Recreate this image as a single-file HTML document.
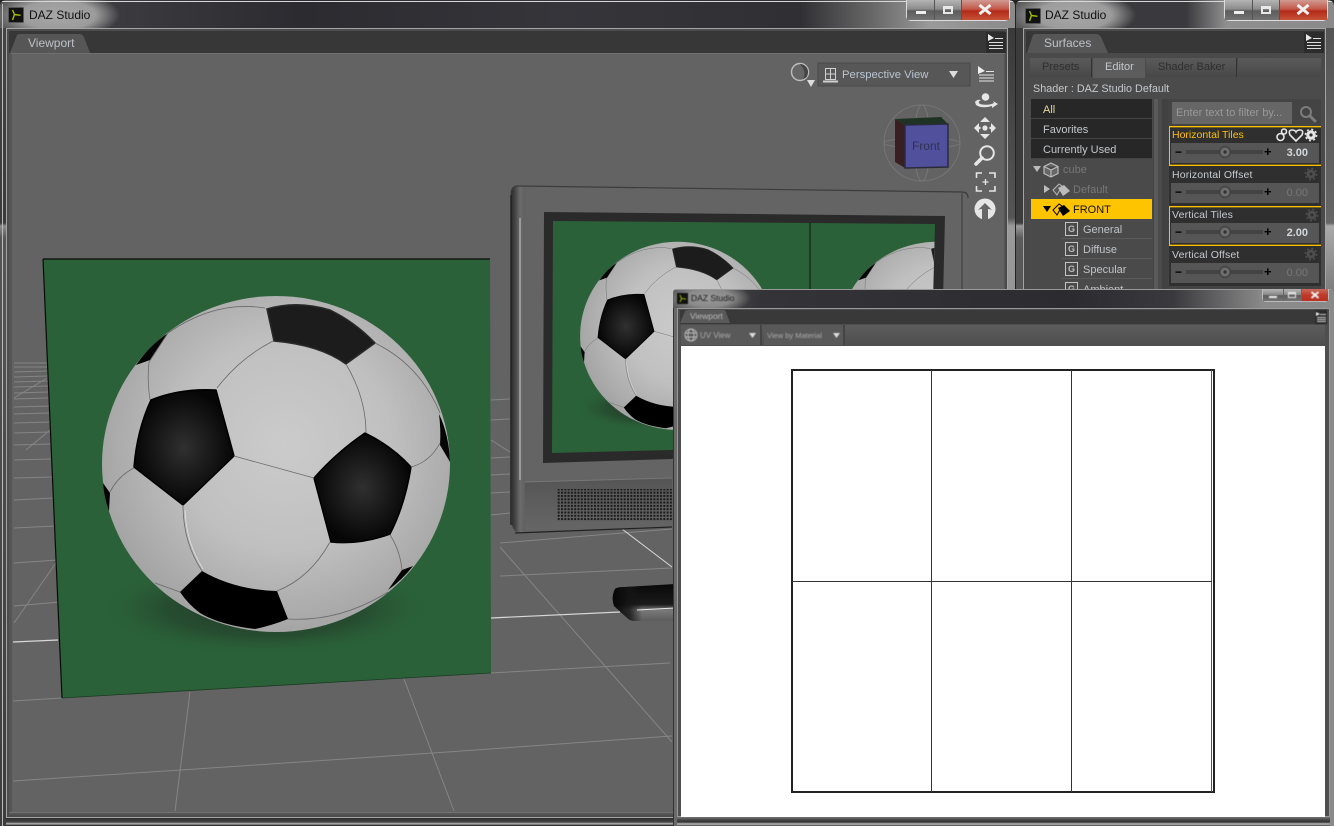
<!DOCTYPE html>
<html><head><meta charset="utf-8"><style>
html,body{margin:0;padding:0;background:#222;width:1334px;height:826px;overflow:hidden}
*{box-sizing:border-box}
body{font-family:"Liberation Sans",sans-serif;font-size:12px;position:relative}
.a,.a *{position:absolute}
.t{white-space:nowrap;line-height:14px}
.win{position:absolute;overflow:hidden;border-radius:6px 6px 0 0}
.row{left:0;width:121px;height:20px;border-bottom:1px solid #3a3a3a}
.row span{position:absolute;top:4px;white-space:nowrap;line-height:14px}
.dk{background:#272727;color:#c4c8cc;border-bottom:1px solid #444}
.sub{border-bottom:1px solid #5a5a5a;left:30px;width:91px;color:#c0c4c8}
.g{position:absolute;left:-1px;top:3px;width:13px;height:14px;border:1px solid #c4c4c4;color:#bbb;font-size:9px;line-height:12px;text-align:center;font-weight:bold}
.prop{left:1169px;width:152px;height:40px;background:#2f2f2f}
.prop.on{border:1px solid #ffc000;border-right:none;box-shadow:inset 0 1px 0 rgba(255,192,0,.35),inset 0 -1px 0 rgba(255,192,0,.35)}
.prop .lbl{left:3px;top:2px;color:#c6cbd0;letter-spacing:.15px}
.prop .sl{left:2px;top:17px;width:148px;height:20px;background:#565656}
.prop.on .lbl{top:1px}
.prop.on .sl{top:16px}
.trk{left:15px;top:7px;width:77px;height:4px;background:#444}
.knob{left:48px;top:3px;width:12px;height:12px;border-radius:50%;background:radial-gradient(circle,#333 0 1.5px,#777 2px,#666 4px,#333 6px)}
.mn{left:4px;top:3px;color:#000;font-weight:bold;line-height:12px;font-size:12px}
.pl{left:93px;top:3px;color:#000;font-weight:bold;line-height:12px;font-size:13px}
.val{right:11px;top:3px;font-weight:bold;color:#d4d8dc;font-size:11px;line-height:14px}
.val.off{color:#777;font-weight:normal}
.btn{top:0;height:20px}
.gb{background:linear-gradient(180deg,#b4b4b4,#8c8c8c 45%,#5c5c5c 55%,#747474)}
.rb{background:linear-gradient(180deg,#d09a92,#c4584a 45%,#b32a18 55%,#c65238)}
.bl{filter:blur(.45px)}
.tab{top:58px;height:19px;background:linear-gradient(#5a5a5a,#484848);border-right:1px solid #333;color:#2f2f2f;padding:2px 0 0 12px;font-size:11px;line-height:15px}
</style></head><body>

<!-- MAIN WINDOW -->
<div class="win a" style="left:0;top:0;width:1015px;height:826px;background:linear-gradient(90deg,#2c2c2c 0,#3a3a3a 1014px)">
 <div style="left:0;top:0;width:1015px;height:29px;background:radial-gradient(ellipse 62px 24px at 58px 15px,#a6a6a6 0,#9c9c9c 60%,rgba(120,120,120,0) 100%),linear-gradient(90deg,#5c5c5c 0,#3c3c40 110px,#2b2b30 300px,#35353a 560px,#303034 800px,#6e6e6e 880px,#9a9a9a 930px,#8a8a8a 1015px)"></div>
 <div style="left:1px;top:1px;width:1013px;height:1px;background:#d8d8d8"></div>
 <div style="left:0;top:28px;width:7px;height:798px;background:linear-gradient(180deg,#444 0,#3a3a3a 195px,#8d8d8d 198px,#555 210px,#3c3c3c 798px)"></div>
 <div style="left:2px;top:4px;width:1px;height:822px;background:#bbb"></div>
 <div style="left:1007px;top:28px;width:8px;height:798px;background:linear-gradient(180deg,#3a3a3a 0,#555 190px,#9a9a9a 198px,#707070 798px)"></div>
 <div style="left:6px;top:28px;width:1002px;height:790px;border:1px solid #a4a4a4;background:#585858"></div>
 <div style="left:7px;top:29px;width:1000px;height:788px;background:#555;border:2px solid #4c4c4c"></div>
 <div style="left:9px;top:31px;width:996px;height:22px;background:#373737"></div>
 <svg style="left:0;top:0" width="100" height="56"><path d="M10 53 L17 35 Q18 34 20 34 L80 34 Q82 34 84 37 L90 53Z" fill="#565656"/></svg>
 <svg style="left:8px;top:7px" width="16" height="16"><rect x=".5" y=".5" width="15" height="15" rx="1" fill="#111" stroke="#555"/><path d="M4.500 3 L6.500 7.500 L4.500 13 M6.500 7.500 L12.500 8.300" stroke="#a0c000" stroke-width="1.4" fill="none"/></svg>
 <div class="t" style="left:29px;top:8px;color:#111">DAZ Studio</div>
 <div class="t" style="left:28px;top:36px;color:#bcc2c8">Viewport</div>
 <svg style="left:986px;top:32px" width="20" height="21"><rect width="20" height="21" fill="#2c2c2c"/><path d="M2 2 L8 6 L2 9Z" fill="#e8e8e8"/><path d="M9 6.500H17M3 10.500H17M3 13.500H17M3 16.500H17" stroke="#ddd"/></svg>
 <div style="left:11px;top:53px;width:994px;height:1px;background:#707070"></div>

 <svg style="left:12px;top:54px" width="992" height="758" viewBox="12 54 992 758">
  <defs>
   <radialGradient id="bg" gradientUnits="userSpaceOnUse" cx="285" cy="445" r="190"><stop offset="0" stop-color="#cbcbcb"/><stop offset=".55" stop-color="#c0c0c0"/><stop offset="1" stop-color="#a4a4a4"/></radialGradient>
   <radialGradient id="pb"><stop offset="0" stop-color="#303030"/><stop offset="1" stop-color="#060606"/></radialGradient>
   <radialGradient id="sh"><stop offset="0" stop-color="#1f2c22" stop-opacity=".9"/><stop offset=".6" stop-color="#24402b" stop-opacity=".6"/><stop offset="1" stop-color="#2a6138" stop-opacity="0"/></radialGradient>
   <linearGradient id="botg" x1="0" y1="0" x2="0" y2="1"><stop offset="0" stop-color="#555"/><stop offset="1" stop-color="#666"/></linearGradient>
   <linearGradient id="bl" x1="0" y1="0" x2="1" y2="0"><stop offset="0" stop-color="#2a2a2a"/><stop offset=".35" stop-color="#4a4a4a"/><stop offset=".65" stop-color="#6c6c6c"/><stop offset="1" stop-color="#606060"/></linearGradient>
   <linearGradient id="st" x1="0" y1="0" x2="0" y2="1"><stop offset="0" stop-color="#090909"/><stop offset=".55" stop-color="#1a1a1a"/><stop offset=".7" stop-color="#7a7a7a"/><stop offset="1" stop-color="#5c5c5c"/></linearGradient>
   <linearGradient id="stl" gradientUnits="userSpaceOnUse" x1="612" y1="0" x2="642" y2="0"><stop offset="0" stop-color="#050505"/><stop offset=".6" stop-color="#151515" stop-opacity=".8"/><stop offset="1" stop-color="#151515" stop-opacity="0"/></linearGradient>
   <pattern id="sp" width="3.3" height="3.3" patternUnits="userSpaceOnUse"><rect width="2" height="2" fill="#1a1a1a"/></pattern>
   <clipPath id="scr"><polygon points="553,221 935,224 933,300 672,450 552,453"/></clipPath>
   <g id="ball">
    <ellipse cx="276" cy="464" rx="174" ry="168" fill="url(#bg)"/>
    <path d="M267 309Q297 300 330 310Q355 322 375 343L346 364Q320 345 274 341Z" fill="#1c1c1c" stroke="#2a2a2a" stroke-width="1.5"/>
    <path d="M151 400Q180 388 216 390L234 456L183 505L134 467Q137 430 151 400Z" fill="url(#pb)" stroke="#000" stroke-width="1.5" stroke-linejoin="round"/>
    <path d="M365 433Q392 446 411 467Q405 505 390 534Q360 545 331 542L314 478Q337 452 365 433Z" fill="url(#pb)" stroke="#000" stroke-width="1.5" stroke-linejoin="round"/>
    <path d="M202 571Q235 590 277 591L288 619Q270 626 255 629Q220 625 200 613Q188 604 180 592Z" fill="#000"/>
    <path d="M136 365L150 360L168 333Q150 345 136 365Z" fill="#050505"/>
    <path d="M439 414Q441 430 440 445L450 462Q449 435 439 414Z" fill="#050505"/>
    <path d="M103 483L110 493L109 511Q104 497 103 483Z" fill="#050505"/>
    <path d="M388 590L402 570L413 566Q402 580 388 590Z" fill="#050505"/>
    <g fill="none" stroke="#6a6a6a" stroke-width=".8">
     <path d="M217 388Q240 358 273 341"/><path d="M150 400Q147 380 149 362L168 333"/>
     <path d="M168 333Q215 300 265 308"/><path d="M346 364Q366 398 366 433"/>
     <path d="M375 343Q420 365 440 413"/><path d="M411 467Q430 462 440 443"/>
     <path d="M234 456L314 478"/><path d="M183 505Q183 542 202 571"/>
     <path d="M134 468Q118 476 110 492"/><path d="M330 542Q310 578 277 591"/>
     <path d="M390 535Q400 550 402 570"/><path d="M288 619Q340 622 388 592"/>
     <path d="M155 583L180 592"/>
    </g>
    <path d="M185 510Q186 542 203 569" fill="none" stroke="#e6e6e6" stroke-width=".7"/>
   </g>
  </defs>
  <rect x="12" y="54" width="992" height="758" fill="#636363"/>
  <!-- grid -->
  <g stroke="#858585" stroke-width="1" fill="none">
   <path d="M14 363H48M14 367H48M14 372L48 371M14 377L48 376M14 382L48 381M14 387L49 386M14 393L49 392M14 399L49 398M14 407L50 406M14 414L50 413M14 423L50 422M14 433L50 432M14 445L51 444M14 460L52 459M14 478L53 477M14 500L54 498M14 528L56 526M14 563L58 560M14 606L60 602"/>
   <path d="M14 398L47 378M26 450L50 430M14 623L58 560"/>
   <path d="M13 701L62 698M491 673L670 663"/>
   <path d="M13 781L181 770L433 753L672 736"/>
   <path d="M190 692L175 811M404 679L454 811M500 547L672 742"/>
   <path d="M500 543L672 529M500 576L672 568"/>
   <path d="M491 440L510 452M491 458L510 457M491 475L510 474M491 493L510 492M491 515L510 513M491 420L510 419M491 400L510 399"/>
  </g>
  <path d="M13 642L58 640M491 618L620 612" stroke="#d8d8d8" stroke-width="1.2" fill="none"/>
  <path d="M622 529L672 567" stroke="#d8d8d8" stroke-width="1" fill="none"/>
  <!-- monitor -->
  <path d="M511 194Q511 186 518 186L962 192Q968 192 968 198L968 420L672 528L522 533Q513 533 512 524Z" fill="#646464"/>
  <path d="M511 194Q511 186 518 186L525 187L525 533L522 533Q513 533 512 524Z" fill="url(#bl)"/>
  <path d="M511 194Q511 186 518 186L962 192Q968 192 968 198" fill="none" stroke="#3c3c3c" stroke-width="1.2"/>
  <path d="M520 218V480" stroke="#ccc" stroke-width="1"/><path d="M511 195V525" stroke="#222" stroke-width="1.500"/>
  <path d="M962 193V300" stroke="#4a4a4a" stroke-width="1.500"/>
  <polygon points="525,482 672,478 672,526 525,530" fill="url(#botg)"/>
  <path d="M525 482L672 478" stroke="#777"/><path d="M515 533L672 527" stroke="#222" stroke-width="1.2"/>
  <rect x="557" y="489" width="118" height="32" fill="url(#sp)"/>
  <polygon points="544,212 945,216 943,300 672,459 543,463" fill="#2a2a2a"/>
  <polygon points="553,221 935,224 933,300 672,450 552,453" fill="#2a6138"/>
  <g clip-path="url(#scr)">
   <ellipse cx="650" cy="408" rx="75" ry="22" fill="url(#sh)"/>
   <use href="#ball" transform="translate(523 76) scale(.56)"/>
   <use href="#ball" transform="translate(782 76) scale(.56)"/>
   <path d="M810 222V460" stroke="#111" stroke-width="1"/>
  </g>
  <path d="M615 589Q617 587 625 587L675 584V621H634Q630 621 626 617L614 606Q611 597 615 589Z" fill="url(#st)"/>
  <path d="M615 589Q617 587 625 587L675 584V621H634Q630 621 626 617L614 606Q611 597 615 589Z" fill="url(#stl)"/>
  <path d="M637 610L675 608" stroke="#e8e8e8" stroke-width="1"/>
  <!-- plane -->
  <polygon points="43,259 490,259 491,673 62,698" fill="#2a6138"/>
  <path d="M43 259H490M43 259L62 698" stroke="#0a0a0a" stroke-width="1.2" fill="none"/>
  <path d="M62 698L491 673" stroke="#1a3a22" stroke-width=".8"/>
  <ellipse cx="265" cy="608" rx="168" ry="48" fill="url(#sh)"/>
  <use href="#ball"/>
  <!-- viewcube -->
  <g fill="none" stroke="#8a8a8a" stroke-width="1" opacity=".5">
   <circle cx="922" cy="143" r="38"/><ellipse cx="922" cy="143" rx="38" ry="5"/><ellipse cx="922" cy="143" rx="8" ry="38"/>
  </g>
  <polygon points="895,119 941,117 948,124 905,125" fill="#1f3325"/>
  <polygon points="895,119 905,125 905,168 895,162" fill="#3a1f22"/>
  <polygon points="905,125 948,124 948,167 905,168" fill="#50509c" stroke="#2b2b3c" stroke-width="1.500"/>
  <text x="926" y="150" font-family="Liberation Sans" font-size="12" fill="#2c2c44" text-anchor="middle" opacity=".85">Front</text>
  <!-- toolbar -->
  <circle cx="800" cy="72" r="8.500" fill="#666" stroke="#bdbdbd" stroke-width="1.400"/><path d="M800 64A8 8 0 0 1 808 72Q808 78 803 79Q807 72 800 64Z" fill="#444"/>
  <path d="M807 80H815L811 87Z" fill="#ddd"/>
  <rect x="818" y="63" width="152" height="23" fill="#575757" stroke="#4a4a4a"/>
  <g fill="none" stroke="#d0d0d0"><rect x="825.500" y="68.500" width="10" height="11"/><path d="M830.500 68V80M825 74H836"/><path d="M823 81.500H838" stroke-width="2"/></g>
  <text x="842" y="78" font-family="Liberation Sans" font-size="11.300" fill="#b8c4d0">Perspective View</text>
  <path d="M949 71H958L953.500 78Z" fill="#ddd"/>
  <path d="M978 66L985 71L978 74Z" fill="#eee"/><path d="M986 71.500H994M979 75H994M979 78H994M979 81H994" stroke="#e4e4e4"/>
  <!-- right tools -->
  <circle cx="985.500" cy="97" r="3.800" fill="#e6e6e6"/>
  <path d="M975 102Q977 99 981 100Q977 102 980 104Q988 106 994 103L993 101L998 104L992 108L992 106Q982 109 976 105Z" fill="#e6e6e6"/>
  <g fill="#e6e6e6"><path d="M985 117L990 122H980ZM985 139L990 134H980ZM974 128L979 123V133ZM996 128L991 123V133Z"/><circle cx="985" cy="128" r="2.600"/><circle cx="979.500" cy="128" r="1.200"/><circle cx="990.500" cy="128" r="1.200"/></g>
  <circle cx="987" cy="153" r="6.800" fill="none" stroke="#e6e6e6" stroke-width="2"/><path d="M982 158L976 164" stroke="#e6e6e6" stroke-width="3.600" stroke-linecap="round"/>
  <path d="M976.500 178V173H982M989 173H995V178M995 186V191H989M982 191H976.500V186" fill="none" stroke="#e6e6e6" stroke-width="1.600"/>
  <path d="M985.500 179V185M982.500 182H988.500" stroke="#e6e6e6" stroke-width="1.300"/>
  <circle cx="985" cy="209" r="10.500" fill="#e6e6e6"/><path d="M985 203L992 210Q990 209 988 209V220H982V209Q980 209 978 210Z" fill="#666"/>
 </svg>
 <div style="left:9px;top:812px;width:996px;height:3px;background:#555;border-top:1px solid #727272"></div>
 <div style="left:6px;top:818px;width:1002px;height:8px;background:linear-gradient(180deg,#2c2c2c,#444 4px,#c0c0c0 6px,#333 7px)"></div>
 <!-- buttons -->
 <div class="btn" style="left:906px;width:104px;height:21px;border:1px solid #ddd;border-top:none;border-radius:0 0 5px 5px;background:#555"></div>
 <div class="btn gb" style="left:907px;width:27px"></div>
 <div class="btn gb" style="left:935px;width:26px"></div>
 <div class="btn rb" style="left:962px;width:47px"></div>
 <div style="left:916px;top:11px;width:10px;height:3px;background:#eee"></div>
 <div style="left:943px;top:6px;width:10px;height:8px;border:2px solid #e8e8e8;border-top-width:3px"></div>
 <svg style="left:977px;top:4px" width="16" height="11"><path d="M2.500 1L13.500 10M13.500 1L2.500 10" stroke="#f0f0f0" stroke-width="3"/></svg>
</div>

<!-- SURFACES WINDOW -->
<div class="win a" style="left:1016px;top:0;width:318px;height:300px;background:#3a3a3a">
 <div style="left:0;top:0;width:318px;height:29px;background:radial-gradient(ellipse 62px 24px at 58px 15px,#a6a6a6 0,#9c9c9c 60%,rgba(120,120,120,0) 100%),linear-gradient(90deg,#5c5c5c,#3a3a3e 110px,#3a3a3e 170px,#8f8f8f 210px,#8a8a8a)"></div>
 <div style="left:1px;top:1px;width:316px;height:1px;background:#d8d8d8"></div>
 <div style="left:0;top:28px;width:7px;height:272px;background:linear-gradient(180deg,#3c3c3c 0,#3c3c3c 195px,#9a9a9a 198px,#5a5a5a 210px,#555)"></div>
 <div style="left:309px;top:28px;width:9px;height:272px;background:linear-gradient(180deg,#555 0,#666 195px,#aaa 198px,#777 272px)"></div>
 <div style="left:7px;top:28px;width:303px;height:272px;border:1px solid #a4a4a4;background:#4a4a4a"></div>
 <div style="left:10px;top:31px;width:298px;height:22px;background:#373737"></div>
 <svg style="left:0;top:0" width="100" height="56"><path d="M11 53 L17 35 Q18 34 20 34 L80 34 Q83 34 85 37 L92 53Z" fill="#565656"/></svg>
 <svg style="left:9px;top:8px" width="16" height="16"><rect x=".5" y=".5" width="15" height="15" rx="1" fill="#111" stroke="#555"/><path d="M4.500 3 L6.500 7.500 L4.500 13 M6.500 7.500 L12.500 8.300" stroke="#a0c000" stroke-width="1.400" fill="none"/></svg>
 <div class="t" style="left:29px;top:8px;color:#111">DAZ Studio</div>
 <div class="t" style="left:28px;top:36px;color:#bcc2c8">Surfaces</div>
 <svg style="left:272px;top:32px" width="36" height="21"><rect x="16" width="20" height="21" fill="#2c2c2c"/><path d="M18 2 L24 6 L18 9Z" fill="#e8e8e8"/><path d="M25 6.500H33M19 10.500H33M19 13.500H33M19 16.500H33" stroke="#ddd"/></svg>
 <div style="left:13px;top:58px;width:292px;height:242px;background:#4b4b4b"></div>
 <div class="t tab" style="left:14px;width:62px">Presets</div>
 <div class="t" style="left:77px;top:58px;width:52px;height:20px;background:#5c5c5c;color:#c4c8cc;padding:2px 0 0 12px;font-size:11px;line-height:15px">Editor</div>
 <div class="t tab" style="left:130px;width:91px">Shader Baker</div>
 <div class="t tab" style="left:222px;width:83px;border:none"></div>
 <div class="t" style="left:17px;top:82px;color:#c4c8cc;font-size:10.8px">Shader : DAZ Studio Default</div>
</div>

<!-- surfaces content (page coords) -->
<div class="a" style="left:0;top:0;width:1334px;height:300px;overflow:hidden;pointer-events:none">
 <div class="a" style="left:1031px;top:99px;width:121px;height:190px;background:#4a4a4a">
  <div class="row dk" style="top:0"><span style="left:12px;color:#e4d89a;font-size:11px">All</span></div>
  <div class="row dk" style="top:20px"><span style="left:12px;font-size:11px">Favorites</span></div>
  <div class="row dk" style="top:40px"><span style="left:12px;font-size:11px">Currently Used</span></div>
  <div class="row" style="top:60px;border:none"><span style="left:32px;color:#777;font-size:11px">cube</span>
   <svg style="left:2px;top:3px" width="30" height="16"><path d="M0 4H8L4 10Z" fill="#bbb"/><path d="M18 1L25 4.500V11.500L18 15L11 11.500V4.500ZM11 4.500L18 8L25 4.500M18 8V15" fill="#666" stroke="#bbb" stroke-width="1.200"/></svg></div>
  <div class="row" style="top:80px;border:none"><span style="left:42px;color:#777;font-size:11px">Default</span>
   <svg style="left:12px;top:3px" width="30" height="16"><path d="M1 3L7 7L1 11Z" fill="#bbb"/><path d="M10 8L16 2L19 4L14 13Z" fill="#555" stroke="#bbb"/><path d="M15 6L21 3L27 9L20 14Z" fill="#bbb"/></svg></div>
  <div class="row" style="top:100px;height:20px;border:none;background:#ffc400"><span style="left:42px;color:#111;font-size:11px">FRONT</span>
   <svg style="left:12px;top:3px" width="30" height="16"><path d="M0 4H8L4 10Z" fill="#000"/><path d="M10 8L16 2L19 4L14 13Z" fill="#ffc400" stroke="#000"/><path d="M15 6L21 3L27 9L20 14Z" fill="#000"/></svg></div>
  <div class="row sub" style="top:120px;height:20px;border-bottom:1px solid #5a5a5a"><span style="left:22px;font-size:11px">General</span><i class="g" style="font-style:normal;left:4px">G</i></div>
  <div class="row sub" style="top:140px"><span style="left:22px;font-size:11px">Diffuse</span><i class="g" style="font-style:normal;left:4px">G</i></div>
  <div class="row sub" style="top:160px"><span style="left:22px;font-size:11px">Specular</span><i class="g" style="font-style:normal;left:4px">G</i></div>
  <div class="row sub" style="top:180px;border:none"><span style="left:22px;font-size:11px">Ambient</span><i class="g" style="font-style:normal;left:4px">G</i></div>
 </div>
 <div style="left:1153px;top:99px;width:5px;height:190px;background:#5a5a5a;border-left:1px solid #444"></div>
 <div style="left:1162px;top:99px;width:6px;height:190px;background:#424242"></div>
 <div style="left:1168px;top:99px;width:153px;height:190px;background:#444"></div>
 <div class="t" style="left:1172px;top:102px;width:120px;height:22px;background:#666;color:#999;font-size:11px;padding:4px 0 0 4px">Enter text to filter by...</div>
 <svg style="left:1298px;top:104px" width="20" height="20"><circle cx="8" cy="8" r="5" fill="none" stroke="#7c7c7c" stroke-width="2"/><path d="M12 12L17 17" stroke="#7c7c7c" stroke-width="3" stroke-linecap="round"/></svg>

 <div class="prop on" style="top:126px"><div class="t lbl" style="color:#ffc000;font-size:10.5px;left:2px;letter-spacing:0">Horizontal Tiles</div><div class="sl" style="left:1px"><div class="trk"></div><div class="knob"></div><div class="mn">−</div><div class="pl">+</div><div class="val">3.00</div></div>
  <svg style="left:105px;top:0" width="46" height="16" fill="none" stroke="#e6e6e6" stroke-width="1.600"><circle cx="5.500" cy="10" r="3.500"/><circle cx="9" cy="4.500" r="2.500"/><path d="M21 14L15 8Q13 3 17 3Q20 3 21 5Q22 3 25 3Q29 3 27 8Z"/><circle cx="36" cy="8" r="3.200" stroke-width="3.200"/><circle cx="36" cy="8" r="5.600" stroke-width="1.600" stroke-dasharray="2 2.400"/></svg></div>
 <div class="prop" style="top:166px"><div class="t lbl" style="font-size:10.5px">Horizontal Offset</div><div class="sl"><div class="trk"></div><div class="knob"></div><div class="mn">−</div><div class="pl">+</div><div class="val off">0.00</div></div>
  <svg style="left:135px;top:1px" width="15" height="15" fill="none" stroke="#4e4e4e"><circle cx="7" cy="7" r="3" stroke-width="3"/><circle cx="7" cy="7" r="5.600" stroke-width="1.600" stroke-dasharray="2 2.400"/></svg></div>
 <div class="prop on" style="top:206px"><div class="t lbl" style="font-size:10.5px;left:2px">Vertical Tiles</div><div class="sl" style="left:1px"><div class="trk"></div><div class="knob"></div><div class="mn">−</div><div class="pl">+</div><div class="val">2.00</div></div>
  <svg style="left:135px;top:1px" width="15" height="15" fill="none" stroke="#4e4e4e"><circle cx="7" cy="7" r="3" stroke-width="3"/><circle cx="7" cy="7" r="5.600" stroke-width="1.600" stroke-dasharray="2 2.400"/></svg></div>
 <div class="prop" style="top:246px"><div class="t lbl" style="font-size:10.5px">Vertical Offset</div><div class="sl"><div class="trk"></div><div class="knob"></div><div class="mn">−</div><div class="pl">+</div><div class="val off">0.00</div></div>
  <svg style="left:135px;top:1px" width="15" height="15" fill="none" stroke="#4e4e4e"><circle cx="7" cy="7" r="3" stroke-width="3"/><circle cx="7" cy="7" r="5.600" stroke-width="1.600" stroke-dasharray="2 2.400"/></svg></div>

 <!-- surfaces buttons -->
 <div class="btn" style="left:1224px;width:104px;height:21px;border:1px solid #ddd;border-top:none;border-radius:0 0 5px 5px;background:#555"></div>
 <div class="btn gb" style="left:1225px;width:27px"></div>
 <div class="btn gb" style="left:1253px;width:26px"></div>
 <div class="btn rb" style="left:1280px;width:47px"></div>
 <div style="left:1234px;top:11px;width:10px;height:3px;background:#eee"></div>
 <div style="left:1261px;top:6px;width:10px;height:8px;border:2px solid #e8e8e8;border-top-width:3px"></div>
 <svg style="left:1295px;top:4px" width="16" height="11"><path d="M2.500 1L13.500 10M13.500 1L2.500 10" stroke="#f0f0f0" stroke-width="3"/></svg>
</div>

<!-- UV WINDOW -->
<div class="win a" style="left:673px;top:289px;width:661px;height:537px;background:#4a4a4a;border-radius:4px 4px 0 0">
 <div style="left:0;top:0;width:661px;height:19px;background:radial-gradient(ellipse 42px 16px at 36px 9px,#999 0,#8a8a8a 55%,rgba(120,120,120,0) 100%),linear-gradient(90deg,#5a5a5a,#343438 90px,#2c2c30 400px,#3a3a3e 500px,#8a8a8a 590px,#8a8a8a)"></div>
 <div style="left:0;top:0;width:661px;height:1px;background:#999"></div>
 <div style="left:0;top:19px;width:6px;height:518px;background:#6a6a6a;border-left:1px solid #333"></div>
 <div style="left:655px;top:19px;width:6px;height:518px;background:#8a8a8a"></div>
 <div style="left:4px;top:19px;width:653px;height:509px;border:1px solid #999;background:#4e4e4e"></div>
 <div style="left:7px;top:21px;width:647px;height:14px;background:#393939"></div>
 <svg style="left:0;top:19px" width="70" height="18"><path d="M7 15L12 3Q13 2 15 2H50Q52 2 53 4L57 15Z" fill="#595959"/></svg>
 <svg class="bl" style="left:4px;top:4px" width="11" height="11"><rect width="11" height="11" fill="#111"/><path d="M3 2L4.500 5.500L3 9M4.500 5.500L9 6" stroke="#9ab000" fill="none"/></svg>
 <div class="t bl" style="left:18px;top:2px;color:#1c1c1c;font-size:8.5px">DAZ Studio</div>
 <div class="t bl" style="left:17px;top:20px;color:#bbb;font-size:8.5px">Viewport</div>
 <svg class="bl" style="left:642px;top:21px" width="12" height="14"><rect width="12" height="14" fill="#2c2c2c"/><path d="M1 2L5 4L1 6Z" fill="#eee"/><path d="M5 4.500H11M2 7.500H11M2 9.500H11M2 11.500H11" stroke="#ccc"/></svg>
 <div style="left:8px;top:36px;width:644px;height:21px;background:linear-gradient(#5c5c5c,#4e4e4e)"></div>
 <div style="left:8px;top:36px;width:81px;height:20px;background:#595959;border-right:2px solid #444"></div>
 <div style="left:91px;top:36px;width:81px;height:20px;background:#595959;border-right:2px solid #444"></div>
 <svg class="bl" style="left:11px;top:39px" width="15" height="15" fill="none" stroke="#bbb"><circle cx="7" cy="7" r="6"/><ellipse cx="7" cy="7" rx="3" ry="6"/><path d="M1 5H13M1 9H13"/></svg>
 <div class="t bl" style="left:27px;top:40px;color:#aaa;font-size:8px">UV View</div>
 <div class="t bl" style="left:94px;top:40px;color:#aaa;font-size:7.5px">View by Material</div>
 <svg class="bl" style="left:0;top:36px" width="180" height="20" fill="#ddd"><path d="M76 8H83L79.500 13ZM160 8H167L163.500 13Z"/></svg>
 <div style="left:8px;top:57px;width:644px;height:471px;background:#fff"></div>
 <div style="left:118px;top:80px;width:424px;height:424px;border:2px solid #222"></div>
 <div style="left:258px;top:81px;width:1px;height:422px;background:#333"></div>
 <div style="left:398px;top:81px;width:1px;height:422px;background:#333"></div>
 <div style="left:538px;top:81px;width:1px;height:422px;background:#555"></div>
 <div style="left:119px;top:292px;width:420px;height:1px;background:#333"></div>
 <div style="left:4px;top:528px;width:653px;height:9px;background:linear-gradient(180deg,#777,#444 3px,#333 5px,#bbb 7px,#444)"></div>
 <!-- buttons -->
 <div style="left:589px;top:0;width:67px;height:13px;border:1px solid #bbb;border-top:none;border-radius:0 0 4px 4px;background:#666"></div>
 <div class="gb" style="left:590px;top:0;width:20px;height:12px"></div>
 <div class="gb" style="left:611px;top:0;width:17px;height:12px"></div>
 <div style="left:629px;top:0;width:26px;height:12px;background:linear-gradient(#c86a5c,#c03a28 50%,#b83020)"></div>
 <div class="bl" style="left:596px;top:7px;width:8px;height:2px;background:#eee"></div>
 <div class="bl" style="left:615px;top:3px;width:8px;height:6px;border:1px solid #e8e8e8;border-top-width:2px"></div>
 <svg class="bl" style="left:637px;top:2px" width="10" height="8"><path d="M1.500 1L8.500 7M8.500 1L1.500 7" stroke="#f0f0f0" stroke-width="2"/></svg>
</div>
</body></html>
